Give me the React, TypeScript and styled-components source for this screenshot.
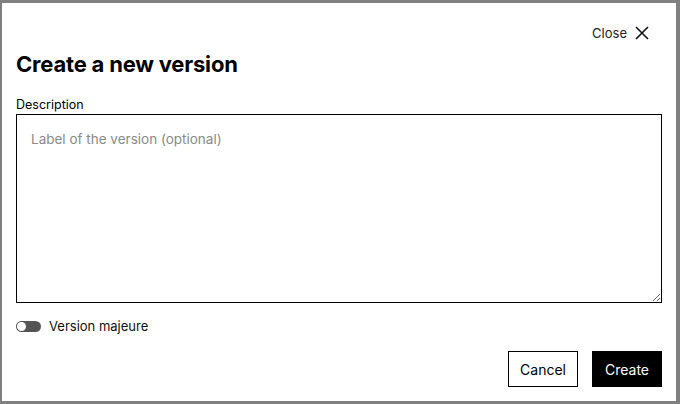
import { FC } from 'react'
import styled, { createGlobalStyle } from 'styled-components'

const GlobalStyle = createGlobalStyle`
  html, body {
    margin: 0;
    padding: 0;
    width: 680px;
    height: 404px;
    overflow: hidden;
    background: #808080;
    font-family: Inter, "Liberation Sans", Arial, sans-serif;
  }
  * { box-sizing: border-box; }
`

const Backdrop = styled.div`
  width: 680px;
  height: 404px;
  padding: 3px 4px 3px 2px;
  display: flex;
`

const Modal = styled.div`
  flex: 1;
  background: #fff;
  display: flex;
  flex-direction: column;
  padding: 17px 14px 14px 14px;
`

const TopBar = styled.div`
  display: flex;
  justify-content: flex-end;
  height: 27px;
  padding-right: 13px;
`

const CloseButton = styled.button`
  display: flex;
  align-items: center;
  gap: 8px;
  background: none;
  border: none;
  padding: 0;
  font-family: inherit;
  font-size: 13px;
  color: #222;
  cursor: pointer;
`

const Title = styled.h2`
  margin: 1px 0 0;
  font-size: 22px;
  font-weight: 700;
  color: #000;
  letter-spacing: -0.2px;
  line-height: 32px;
`

const Label = styled.label`
  margin-top: 17px;
  font-size: 12.5px;
  color: #000;
  line-height: 16px;
`

const TextArea = styled.textarea`
  margin-top: 1px;
  height: 191px;
  width: 100%;
  border: 1px solid #000;
  border-radius: 0;
  padding: 16px 14px;
  font-family: inherit;
  font-size: 13.5px;
  resize: vertical;
  outline: none;
  &::placeholder { color: #8a8a8a; }
`

const SwitchRow = styled.div`
  display: flex;
  align-items: center;
  gap: 8px;
  margin-top: 15px;
  font-size: 13px;
  color: #111;
`

const Track = styled.span`
  width: 25px;
  height: 11px;
  border-radius: 6px;
  background: #555;
  position: relative;
  display: inline-block;
`

const Thumb = styled.span`
  position: absolute;
  left: 1px;
  top: 1px;
  width: 9px;
  height: 9px;
  border-radius: 50%;
  background: #fff;
`

const Actions = styled.div`
  display: flex;
  justify-content: flex-end;
  gap: 14px;
  margin-top: 17px;
`

const Button = styled.button<{ $primary?: boolean }>`
  height: 36px;
  padding: 0 ${p => (p.$primary ? '12px' : '11px')};
  font-family: inherit;
  font-size: 14px;
  border: 1px solid #000;
  border-radius: 0;
  background: ${p => (p.$primary ? '#000' : '#fff')};
  color: ${p => (p.$primary ? '#fff' : '#000')};
  cursor: pointer;
`

const App: FC = () => (
  <>
    <GlobalStyle />
    <Backdrop>
      <Modal>
        <TopBar>
          <CloseButton>
            Close
            <svg width="14" height="14" viewBox="0 0 14 14" fill="none" stroke="#111" strokeWidth="1.6">
              <path d="M1 1L13 13M13 1L1 13" />
            </svg>
          </CloseButton>
        </TopBar>
        <Title>Create a new version</Title>
        <Label>Description</Label>
        <TextArea placeholder="Label of the version (optional)" />
        <SwitchRow>
          <Track>
            <Thumb />
          </Track>
          Version majeure
        </SwitchRow>
        <Actions>
          <Button>Cancel</Button>
          <Button $primary>Create</Button>
        </Actions>
      </Modal>
    </Backdrop>
  </>
)

export default App
